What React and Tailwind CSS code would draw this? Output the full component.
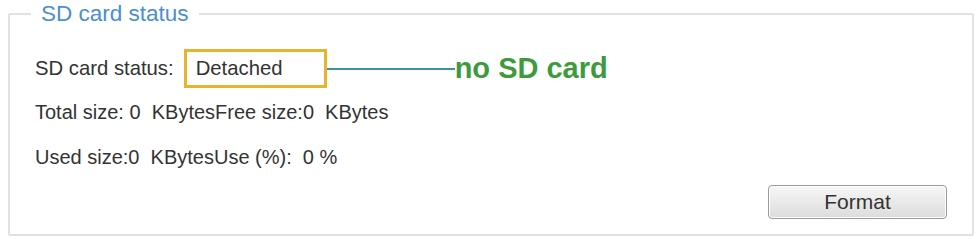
import React from 'react';

const App = () => {
  return (
    <div
      className="w-[976px] h-[239px] bg-white overflow-hidden"
      style={{ fontFamily: '"Liberation Sans", Arial, sans-serif' }}
    >
      <fieldset className="ml-[8px] mr-[2px] mt-[1px] h-[235px] border-2 border-[#e2e2e2] rounded-[2px] pl-[24px] pr-[24px]">
        <legend className="px-[10px] -ml-[3px] text-[22.5px] leading-[26px] text-[#4a8fcf]">SD card status</legend>

        {/* Status row */}
        <div className="flex items-center mt-[22px] text-[20.3px] text-[#333]">
          <span className="ml-[1px]">SD card status:</span>
          <div className="ml-[10px] w-[143px] h-[39px] border-[3px] border-[#e6b52c] flex items-center pl-[9px]">
            Detached
          </div>
          <div className="w-[128px] h-[2px] bg-[#3c91a6]" />
          <span className="text-[29px] font-bold text-[#3d9b3d] leading-none">no SD card</span>
        </div>

        <div className="mt-[12px] text-[20px] text-[#333] leading-[24px] ml-[1px]">
          Total size: 0&nbsp; KBytesFree size:0&nbsp; KBytes
        </div>
        <div className="mt-[21px] text-[20px] text-[#333] leading-[24px] ml-[1px]">
          Used size:0&nbsp; KBytesUse (%):&nbsp; 0 %
        </div>

        <div className="flex justify-end mt-[16px]">
          <button className="w-[179px] h-[34px] mr-[1px] rounded-[4px] border border-[#9a9a9a] bg-gradient-to-b from-[#f7f7f7] to-[#dcdcdc] text-[21px] text-[#333] shadow-[inset_0_0_0_1px_#fff]">
            Format
          </button>
        </div>
      </fieldset>
    </div>
  );
};

export default App;
